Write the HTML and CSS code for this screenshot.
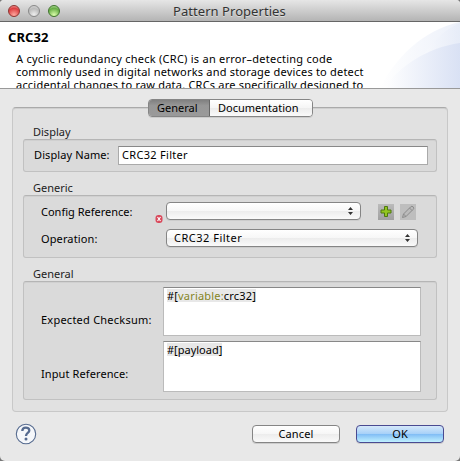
FILE: index.html
```html
<!DOCTYPE html>
<html lang="en">
<head>
<meta charset="utf-8">
<title>Pattern Properties</title>
<link rel="stylesheet" href="styles.css">
</head>
<body>
<div class="window">
  <header class="titlebar">
    <div class="lights"><i class="light close"></i><i class="light minimize"></i><i class="light zoom"></i></div>
    <span class="title">Pattern Properties</span>
  </header>
  <section class="banner">
    <svg class="swoosh" width="80" height="66" viewBox="0 0 80 66">
      <defs>
        <linearGradient id="sw1" x1="0" x2="1"><stop offset="0" stop-color="#fff"/><stop offset="1" stop-color="#e4eaf7"/></linearGradient>
        <linearGradient id="sw2" x1="0" x2="1"><stop offset="0" stop-color="#fff"/><stop offset="1" stop-color="#d9e1f4"/></linearGradient>
      </defs>
      <path d="M0 66C14 38 42 8 80 0V66Z" fill="url(#sw1)" opacity=".7"/>
      <path d="M30 66C36 38 54 12 80 1V66Z" fill="url(#sw1)" opacity=".7"/>
      <path d="M4 66C20 44 46 26 80 21V66Z" fill="url(#sw2)"/>
    </svg>
    <h1>CRC32</h1>
    <p><span class="line l1">A cyclic redundancy check (CRC) is an error–detecting code</span><span class="line l2">commonly used in digital networks and storage devices to detect</span><span class="line l3">accidental changes to raw data. CRCs are specifically designed to</span></p>
  </section>
  <main class="content">
    <nav class="tabs"><span class="tab active">General</span><span class="tab docs">Documentation</span></nav>
    <div class="panel">
      <h2 class="t-display">Display</h2>
      <div class="group display">
        <label class="t-name">Display Name:</label>
        <div class="input"><span class="t-input-filter">CRC32 Filter</span></div>
      </div>
      <h2 class="t-generic">Generic</h2>
      <div class="group generic">
        <div class="row">
          <label class="t-config">Config Reference:</label>
          <svg class="error" width="8" height="8" viewBox="0 0 8 8"><rect x=".5" width="7" height="8" rx="3" fill="#d94a5c"/><path d="M2.500 2l3 4M5.500 2L2.500 6" stroke="#fff" stroke-width="1.200"/></svg>
          <div class="select short"><svg width="5" height="8" viewBox="0 0 5 8"><path d="M0 3L2.500 0L5 3ZM0 5H5L2.500 8Z" fill="#333"/></svg></div>
          <span class="tool add"><svg width="16" height="16" viewBox="0 0 16 16"><path d="M6.500 2.500h3v3.500h3.500v3h-3.500v3.500h-3v-3.500h-3.500v-3h3.500z" fill="#93c61f" stroke="#4e7810"/></svg></span>
          <span class="tool edit"><svg width="16" height="16" viewBox="0 0 16 16"><path d="M2.500 13.500L3.500 10L10.500 3Q12 1.500 13.200 2.900T13 5.500L6 12.500Z M3.500 10L6 12.500M9.500 4L12 6.500" fill="#bbb" stroke="#8b8b8b"/></svg></span>
        </div>
        <div class="row">
          <label class="t-op">Operation:</label>
          <div class="select long"><span class="t-filter">CRC32 Filter</span><svg width="5" height="8" viewBox="0 0 5 8"><path d="M0 3L2.500 0L5 3ZM0 5H5L2.500 8Z" fill="#333"/></svg></div>
        </div>
      </div>
      <h2 class="t-general">General</h2>
      <div class="group general">
        <div class="field first"><label class="t-sum">Expected Checksum:</label><div class="area"><span class="code t-var">#[<b>variable:</b>crc32]</span></div></div>
        <div class="field second"><label class="t-ref">Input Reference:</label><div class="area"><span class="code">#[payload]</span></div></div>
      </div>
    </div>
  </main>
  <footer class="footer">
    <svg class="help" width="22" height="22" viewBox="0 0 22 22"><circle cx="11" cy="11" r="9.700" fill="#f5f7fa" stroke="#566b8f" stroke-width="1.100"/><path d="M7.300 8C7.300 3.400 14.300 3.600 14.300 7.400C14.300 10 11 10 11 13" fill="none" stroke="#566b8f" stroke-width="2.300"/><circle cx="11" cy="16" r="1.500" fill="#566b8f"/></svg>
    <span class="button cancel">Cancel</span>
    <span class="button ok">OK</span>
  </footer>
</div>
</body>
</html>
```
FILE: styles.css
```css
* { box-sizing: border-box; }
body { margin: 0; background: #777; font: 11px/13px "Noto Sans", "Open Sans", sans-serif; color: #000; }
.window { width: 460px; height: 461px; background: #e8e8e8; border-radius: 4px 4px 5px 5px; overflow: hidden; display: flex; flex-direction: column; white-space: nowrap; }
.titlebar { height: 22px; flex: none; display: grid; grid-template-columns: 66px 1fr 68px; align-items: center; background: linear-gradient(#e6e6e6, #b4b4b4); border-bottom: 1px solid #666; }
.lights { display: flex; gap: 8px; padding-left: 8px; }
.light { width: 12px; height: 12px; border-radius: 50%; border: 1px solid #888; background: radial-gradient(circle at 50% 85%, #eee, #bbb 60%, #ddd); }
.close { border-color: #8e3430; background: radial-gradient(circle at 50% 90%, #ffaaa0, #dc3e40 65%, #f6b0ae); }
.zoom { border-color: #3f742c; background: radial-gradient(circle at 50% 90%, #dcffac, #67ad45 65%, #c5e9b2); }
.title { font-size: 13px; line-height: 16px; color: #333; justify-self: start; padding-left: 107px; letter-spacing: .05px; text-shadow: 0 1px #ddd; }
.banner { height: 67px; flex: none; background: #fff; border-bottom: 1px solid #999; overflow: hidden; position: relative; }
.swoosh { position: absolute; right: 0; top: 0; }
h1 { margin: 7px 0 0 8px; font-size: 13px; line-height: 16px; font-weight: 700; letter-spacing: .1px; }
p { margin: 7px 0 0 16px; position: relative; }
.line { display: block; line-height: 13px; font-size: 11px; letter-spacing: .2px; }
.l1 { letter-spacing: .25px; }
.l3 { letter-spacing: .21px; }
.content { padding: 10px 12px 0; height: 323px; flex: none; }
.tabs { display: flex; width: 165px; height: 18px; margin: 0 auto 0 136px; border: 1px solid #858585; border-radius: 4px; overflow: hidden; position: relative; z-index: 1; box-shadow: 0 1px #ccc; }
.tab { flex: 1; padding-left: 8px; line-height: 16px; background: linear-gradient(#fff, #f5f5f5 50%, #ececec 51%, #fafafa); }
.tab.active { flex: 0 0 61px; background: linear-gradient(#808080, #979797 35%, #9a9a9a); border-right: 1px solid #666; }
.panel { margin-top: -10px; width: 436px; height: 305px; border: 1px solid #c8c8c8; border-top-color: #aaa; border-radius: 4px; background: #e1e1e1; padding: 17px 10px 0; box-shadow: inset 0 1px #cfcfcf; }
h2 { font-size: 11px; line-height: 14px; height: 14px; font-weight: 400; margin: 0 0 0 10px; color: #222; }
.group { width: 414px; border: 1px solid #c1c1c1; border-top-color: #b5b5b5; border-radius: 3px; background: #dadada; box-shadow: inset 0 1px #d0d0d0; }
.display { height: 33px; display: flex; align-items: center; padding-left: 10px; margin-bottom: 9px; }
.display label { width: 84px; padding-bottom: 2px; }
.input { width: 310px; height: 19px; border: 1px solid #aaa; border-top-color: #888; background: #fff; padding-left: 3px; line-height: 16px; }
.t-input-filter { letter-spacing: .3px; }
.t-filter { letter-spacing: .5px; }
.t-name { letter-spacing: .1px; }
.t-op { letter-spacing: .12px; }
.t-sum { letter-spacing: .24px; }
.t-ref { letter-spacing: .1px; }
.generic { height: 63px; padding: 6px 0 0 17px; margin-bottom: 9px; }
.row { display: flex; height: 27px; }
.row label { width: 114px; line-height: 20px; }
.error { margin: 13px 3px 0 0; }
.row:last-child label { width: 125px; }
.select { height: 18px; border: 1px solid #858585; border-radius: 4px; background: linear-gradient(#fff, #f7f7f7 49%, #ececec 51%, #fafafa); display: flex; align-items: center; padding: 0 7px 0 7px; box-shadow: 0 1px #ccc; }
.select span { position: relative; top: -1px; }
.select svg { margin-left: auto; }
.short { width: 195px; margin-right: 17px; }
.long { width: 252px; }
.tool { width: 16px; height: 16px; margin: 2px 6px 0 0; background: linear-gradient(#bbb, #a0a0a0); }
.tool svg { display: block; }
.edit { background: #bebebe; }
.general { height: 119px; padding: 5px 0 0 17px; }
.field { display: flex; align-items: center; }
.field label { width: 122px; padding-top: 15px; }
.second label { padding-top: 13px; }
.area { width: 258px; height: 49px; border: 1px solid #bbb; border-top-color: #888; background: #fff; padding: 1px 0 0 3px; line-height: 12px; }
.second { margin-top: 5px; }
.second .area { height: 51px; }
.code { display: inline-block; line-height: 13px; background: #e8e8e8; }
.t-var { letter-spacing: .18px; }
.code b { font-weight: 400; color: #85851f; }
.footer { display: flex; padding: 13px 16px 0 15px; align-items: flex-start; }
.help { margin-top: -2px; }
.button { width: 88px; height: 18px; border: 1px solid #858585; border-radius: 4px; text-align: center; line-height: 16px; background: linear-gradient(#fff, #f6f6f6 49%, #ececec 51%, #fafafa); box-shadow: 0 1px #ccc; }
.cancel { margin-left: auto; margin-right: 16px; letter-spacing: .15px; }
.ok { border-color: #4a4a91; background: linear-gradient(#d5e8fa, #a8d1f8 48%, #80bcf5 51%, #c0f1ff); }
```
